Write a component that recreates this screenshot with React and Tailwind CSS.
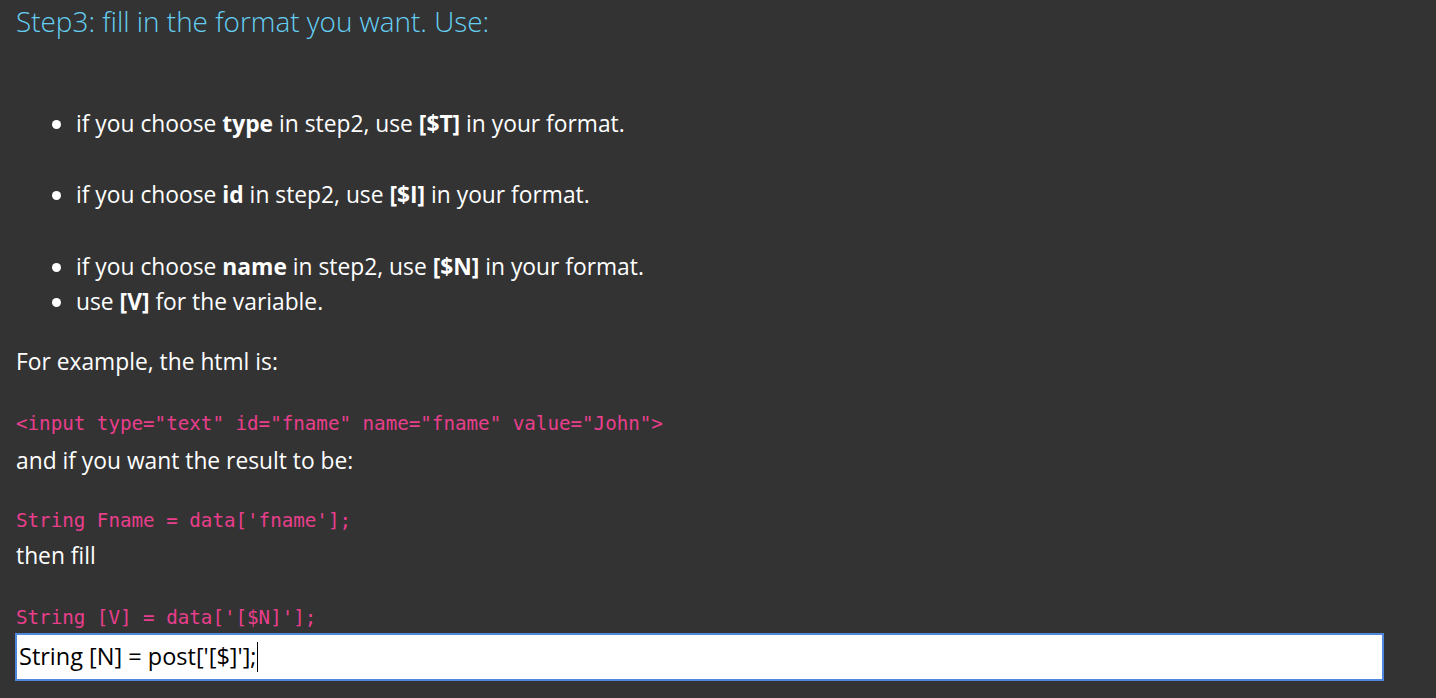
import React from "react";

const Bullet = ({ children, className = "" }) => (
  <li className={`flex items-center h-[30px] ${className}`}>
    <span className="w-[9px] h-[9px] rounded-full bg-white ml-[52px] mr-[15px]" />
    <span>{children}</span>
  </li>
);

const Code = ({ children, className = "" }) => (
  <div
    className={`h-[28px] flex items-center text-[#e83e8c] text-[19.2px] whitespace-pre ${className}`}
    style={{ fontFamily: '"DejaVu Sans Mono", monospace' }}
  >
    {children}
  </div>
);

export default function App() {
  return (
    <div
      className="w-[1436px] h-[698px] bg-[#333333] text-white text-[22.8px] overflow-hidden px-4"
      style={{ fontFamily: '"Open Sans", "Noto Sans", sans-serif' }}
    >
      <h1 className="h-[44px] flex items-center text-[27.9px] font-light text-[#65cff3]">
        Step3: fill in the format you want. Use:
      </h1>
      <ul className="-ml-4 mt-[65px]">
        <Bullet>
          if you choose <b>type</b> in step2, use <b>[$T]</b> in your format.
        </Bullet>
        <Bullet className="mt-[41px]">
          if you choose <b>id</b> in step2, use <b>[$I]</b> in your format.
        </Bullet>
        <Bullet className="mt-[42px]">
          if you choose <b>name</b> in step2, use <b>[$N]</b> in your format.
        </Bullet>
        <Bullet className="mt-[5px]">
          use <b>[V]</b> for the variable.
        </Bullet>
      </ul>
      <p className="h-[30px] flex items-center mt-[30px]">For example, the html is:</p>
      <Code className="mt-[33px]">{'<input type="text" id="fname" name="fname" value="John">'}</Code>
      <p className="h-[30px] flex items-center mt-[8px]">and if you want the result to be:</p>
      <Code className="mt-[31px]">{"String Fname = data['fname'];"}</Code>
      <p className="h-[30px] flex items-center mt-[6px]">then fill</p>
      <Code className="mt-[33px]">{"String [V] = data['[$N]'];"}</Code>
      <div className="mt-[1px] w-[1369px] h-[48px] -ml-[1px] bg-white border-2 border-[#4f87dd] flex items-center px-[2px] text-black text-[23.5px]">
        <span>String [N] = post['[$]'];</span>
        <span className="w-px h-[30px] bg-black" />
      </div>
    </div>
  );
}
